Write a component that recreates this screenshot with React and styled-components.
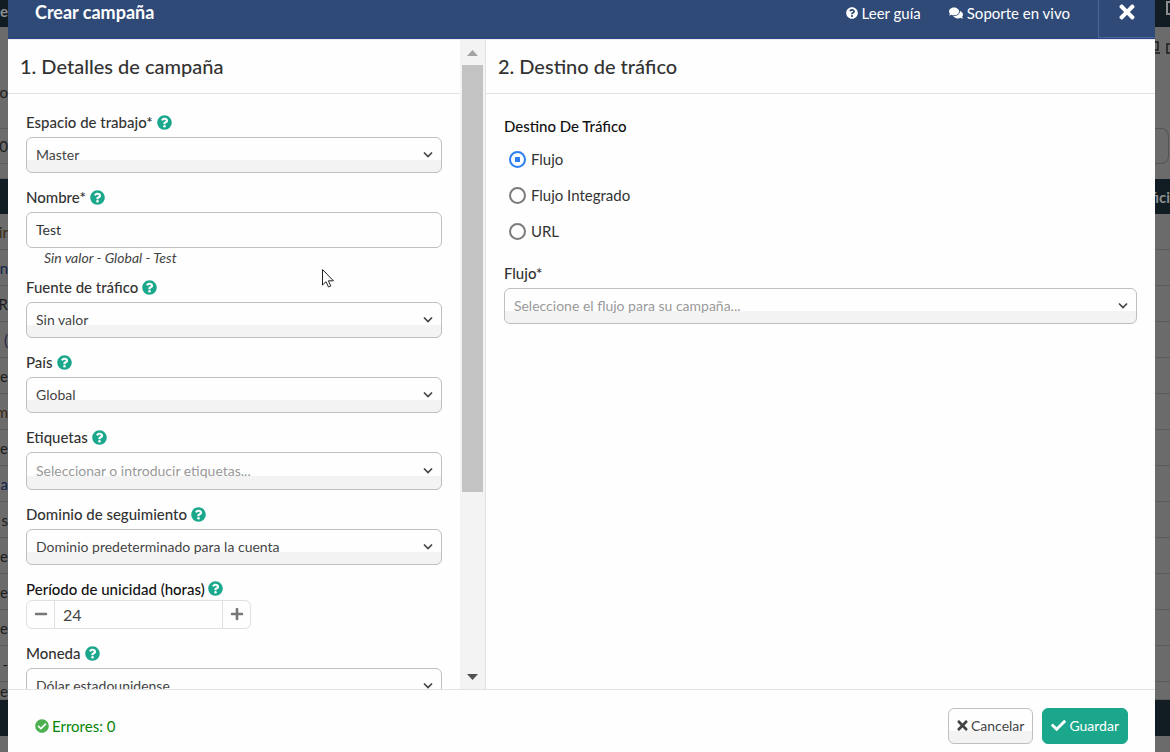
import { useState } from "react";
import styled, { createGlobalStyle } from "styled-components";
import {
  FaQuestionCircle,
  FaComments,
  FaTimes,
  FaCheck,
  FaCheckCircle,
  FaMinus,
  FaPlus,
} from "react-icons/fa";

const GlobalStyle = createGlobalStyle`
  *, *::before, *::after {
    box-sizing: border-box;
  }

  body {
    margin: 0;
    overflow: hidden;
    background-color: #6b6b6b;
    color: #333;
    font-family: Lato, "Open Sans", sans-serif;
    font-size: 15px;
  }

  button, input, select {
    font: inherit;
    color: inherit;
  }
`;

const Page = styled.div`
  display: grid;
  grid-template-columns: 8px minmax(0, 1fr) 15px;
  height: 100vh;
`;

/* dimmed table behind the modal */
const Backdrop = styled.div`
  display: flex;
  flex-direction: column;
  align-items: stretch;
  overflow: hidden;
  background-color: #6b6b6b;
`;

const BackdropBar = styled.div`
  flex: none;
  display: flex;
  align-items: center;
  justify-content: flex-end;
  height: ${({ $h }) => $h}px;
  padding-bottom: ${({ $pb }) => $pb || 0}px;
  background-color: #111c23;
  color: #8c8f91;
  font-weight: bold;
  white-space: nowrap;
  overflow: hidden;
`;

const BackdropRow = styled.div`
  flex: none;
  display: flex;
  align-items: center;
  justify-content: flex-end;
  height: ${({ $h }) => $h || 36}px;
  padding-top: ${({ $pt }) => $pt || 0}px;
  border-bottom: 1px solid #5c5c5c;
  color: ${({ $color }) => $color || "#1c1c1c"};
  white-space: nowrap;
  overflow: hidden;
`;

const BackdropSearch = styled.div`
  flex: none;
  height: 36px;
  margin: 34px 1px 15px 0;
  border: 1px solid #555;
  border-left: none;
  border-radius: 0 8px 8px 0;
`;

const BackdropTools = styled.div`
  flex: none;
  display: flex;
  justify-content: space-between;
  height: 67px;
  padding-top: 14px;
`;

const Modal = styled.div`
  display: flex;
  flex-direction: column;
  min-width: 0;
  min-height: 0;
  background-color: #fefefe;
`;

const ModalHeader = styled.header`
  flex: none;
  display: flex;
  align-items: stretch;
  height: 39px;
  padding-left: 27px;
  background-color: #304a77;
  border-bottom: 1px solid #2c4289;
  color: #fff;
`;

const ModalTitle = styled.h1`
  flex: 1;
  margin: 0;
  padding-top: 2px;
  font-size: 18px;
  line-height: 20px;
  font-weight: bold;
`;

const HeaderLink = styled.a`
  display: flex;
  align-items: center;
  gap: 4px;
  height: 26px;
  margin-right: 28px;
  color: #fff;
  text-decoration: none;
`;

const CloseButton = styled.button`
  display: flex;
  align-items: flex-start;
  justify-content: center;
  width: 57px;
  height: 38px;
  padding: 1px 0 0;
  border: solid #4a669a;
  border-width: 0 0 1px 1px;
  background: none;
  color: #fff;
  font-size: 22px;
  cursor: pointer;
`;

const ModalBody = styled.div`
  flex: 1;
  display: grid;
  grid-template-columns: minmax(0, 5fr) minmax(0, 7fr);
  min-height: 0;
  border-top: 1px solid #ececf2;
`;

const LeftColumn = styled.div`
  display: flex;
  min-height: 0;
  border-right: 1px solid #e2e2e2;
`;

const Panel = styled.section`
  flex: 1;
  min-width: 0;
  overflow: hidden;
`;

const PanelTitle = styled.h2`
  margin: 0;
  padding: 12px 12px 13px;
  border-bottom: 1px solid #e2e2e2;
  font-size: 20px;
  line-height: 28px;
  font-weight: 500;
`;

const Fields = styled.div`
  display: flex;
  flex-direction: column;
  gap: 9px;
  padding: 13px 18px;
`;

const Field = styled.div`
  display: flex;
  flex-direction: column;
`;

const FieldLabel = styled.label`
  display: flex;
  align-items: center;
  gap: ${({ $tight }) => ($tight ? 3 : 4)}px;
  height: ${({ $tight }) => ($tight ? 26 : 30)}px;
  padding-top: ${({ $tight }) => ($tight ? 3 : 0)}px;
  color: ${({ $tight }) => ($tight ? "#111" : "#333")};
  font-weight: 500;
`;

const HelpIcon = styled(FaQuestionCircle)`
  color: #1aa78c;
  font-size: 15px;
`;

const SelectBox = styled.div`
  display: grid;
  align-items: center;

  > * {
    grid-area: 1 / 1;
  }

  > svg {
    justify-self: end;
    margin-right: 8px;
    pointer-events: none;
  }
`;

const Select = styled.select`
  appearance: none;
  width: 100%;
  height: ${({ $tall }) => ($tall ? 38 : 36)}px;
  padding: 0 28px 2px 9px;
  border: 1px solid #bfbfbf;
  border-radius: 6px;
  background: linear-gradient(#fefefe 65%, #f3f3f3 65%);
  color: ${({ $empty }) => ($empty ? "#999" : "#444")};
  font-size: 14px;
`;

const TextInput = styled.input`
  width: 100%;
  height: 36px;
  padding: 0 9px 2px;
  border: 1px solid #bfbfbf;
  border-radius: 6px;
  background-color: #fefefe;
  color: #333;
  font-size: 14px;
`;

const Hint = styled.p`
  margin: 0 18px -5px;
  font-size: 14px;
  line-height: 20px;
  font-style: italic;
  color: #444;
`;

const Stepper = styled.div`
  display: flex;
  width: 225px;
  height: 29px;
  border: 1px solid #e0e0e0;
  border-radius: 6px;
  overflow: hidden;
`;

const StepButton = styled.button`
  width: 27px;
  padding: 0 0 2px;
  border: none;
  background: none;
  color: #777;
  font-size: 14px;
  line-height: 0;
  cursor: pointer;
`;

const StepInput = styled.input`
  flex: 1;
  min-width: 0;
  padding: 0 8px;
  border: solid #e0e0e0;
  border-width: 0 1px;
  background: none;
  color: #444;
  font-size: 16px;
`;

const ScrollTrack = styled.div`
  flex: none;
  display: flex;
  flex-direction: column;
  align-items: stretch;
  width: 25px;
  padding: 0 2px;
  background-color: #f3f3f3;
`;

const ScrollArrow = styled.div`
  flex: none;
  display: flex;
  align-items: center;
  justify-content: center;
  height: 25px;
  color: ${({ $dim }) => ($dim ? "#a3a3a3" : "#505050")};
`;

const ScrollRange = styled.div`
  flex: 1;
`;

const ScrollThumb = styled.div`
  height: 71.3%;
  background-color: #c3c3c3;
`;

const RadioGroup = styled.fieldset`
  min-width: 0;
  margin: 0;
  padding: 0;
  border: none;
`;

const Legend = styled.legend`
  padding: 4px 0 0;
  line-height: 30px;
  color: #111;
  font-weight: 500;
`;

const RadioLabel = styled.label`
  display: flex;
  align-items: center;
  gap: 5px;
  height: 36px;
  padding-left: 5px;
`;

const Radio = styled.input`
  appearance: none;
  width: 17px;
  height: 17px;
  margin: 0;
  border: 2px solid #7b7b7b;
  border-radius: 50%;

  &:checked {
    border-color: #2b7ff0;
    background: radial-gradient(circle, #2b7ff0 45%, transparent 46%) center / 9px 9px no-repeat;
  }
`;

const ModalFooter = styled.footer`
  flex: none;
  display: flex;
  align-items: center;
  gap: 9px;
  height: 63px;
  padding: 10px 27px 0;
  border-top: 1px solid #e2e2e2;
`;

const Errors = styled.p`
  flex: 1;
  display: flex;
  align-items: center;
  gap: 3px;
  margin: 0;
  color: #048404;

  svg {
    color: #4caf50;
    font-size: 14px;
  }
`;

const FooterButton = styled.button`
  display: flex;
  align-items: center;
  gap: 3px;
  height: 36px;
  padding: 0 8px 1px;
  border: 1px solid ${({ $primary }) => ($primary ? "#1aa78c" : "#bfbfbf")};
  border-radius: 6px;
  background: ${({ $primary }) =>
    $primary ? "#1aa78c" : "linear-gradient(#fefefe 65%, #f3f3f3 65%)"};
  color: ${({ $primary }) => ($primary ? "#fff" : "#444")};
  font-size: 14px;
  cursor: pointer;

  svg {
    width: ${({ $primary }) => ($primary ? 15 : 11)}px;
    height: 15px;
  }
`;

const Pointer = styled.svg`
  position: absolute;
  left: 322px;
  top: 269px;
  pointer-events: none;
`;

const Chevron = () => (
  <svg width="12" height="8" viewBox="0 0 12 8" fill="none" aria-hidden="true">
    <path d="M2 1.5l4 4 4-4" stroke="#444" strokeWidth="1.7" />
  </svg>
);

const leftRows = [
  { text: "tir", color: "#3a2a10" },
  { text: "n", color: "#10244a" },
  { text: "R" },
  { text: "(", color: "#2a2440" },
  { text: "e" },
  { text: "m", color: "#3a2410" },
  { text: "e" },
  { text: "a", color: "#10244a" },
  { text: "s" },
  { text: "e" },
  { text: "e" },
  { text: "e" },
  { text: "-" },
];

const SelectField = ({ id, label, value, placeholder, help = true, tall }) => (
  <Field>
    <FieldLabel htmlFor={id}>
      {label}
      {help && <HelpIcon />}
    </FieldLabel>
    <SelectBox>
      <Select id={id} $tall={tall} $empty={!value} defaultValue="0">
        <option value="0">{value || placeholder}</option>
      </Select>
      <Chevron />
    </SelectBox>
  </Field>
);

const BackdropLeft = () => (
  <Backdrop aria-hidden="true">
    <BackdropBar $h={27} $pb={6}>
      e
    </BackdropBar>
    <BackdropRow $h={102} $pt={28}>
      ro
    </BackdropRow>
    <BackdropRow $h={35}>0</BackdropRow>
    <BackdropRow $h={15} />
    <BackdropBar $h={35} />
    {leftRows.map((row, i) => (
      <BackdropRow key={i} $color={row.color}>
        {row.text}
      </BackdropRow>
    ))}
    <BackdropRow $h={18}>ne</BackdropRow>
    <BackdropBar $h={36} />
  </Backdrop>
);

const BackdropRight = () => (
  <Backdrop aria-hidden="true">
    <BackdropBar $h={27} $pb={12}>
      <svg width="5" height="14">
        <path d="M5 1H2v12h3" fill="none" stroke="#8c8f91" strokeWidth="2" />
      </svg>
    </BackdropBar>
    <BackdropTools>
      <svg width="15" height="14" fill="none" stroke="#1c1c1c" strokeWidth="1.5">
        <path d="M0 1h3v8H0M0 12h5M15 3h-3v9h3" />
      </svg>
    </BackdropTools>
    <BackdropSearch />
    <BackdropBar $h={35}>fici</BackdropBar>
    {leftRows.map((_, i) => (
      <BackdropRow key={i} />
    ))}
    <BackdropRow $h={18} />
    <BackdropBar $h={36} />
  </Backdrop>
);

const App = () => {
  const [name, setName] = useState("Test");
  const [hours, setHours] = useState(24);
  const [target, setTarget] = useState("Flujo");

  return (
    <>
      <GlobalStyle />
      <Page>
        <BackdropLeft />
        <Modal role="dialog" aria-labelledby="modal-title">
          <ModalHeader>
            <ModalTitle id="modal-title">Crear campaña</ModalTitle>
            <HeaderLink href="#guia">
              <FaQuestionCircle size={12} />
              Leer guía
            </HeaderLink>
            <HeaderLink href="#soporte">
              <FaComments size={14} />
              Soporte en vivo
            </HeaderLink>
            <CloseButton type="button" aria-label="Cerrar">
              <FaTimes />
            </CloseButton>
          </ModalHeader>

          <ModalBody>
            <LeftColumn>
              <Panel>
                <PanelTitle>1. Detalles de campaña</PanelTitle>
                <Fields>
                  <SelectField id="workspace" label="Espacio de trabajo*" value="Master" />
                  <Field>
                    <FieldLabel htmlFor="name">
                      Nombre*
                      <HelpIcon />
                    </FieldLabel>
                    <TextInput
                      id="name"
                      value={name}
                      onChange={(e) => setName(e.target.value)}
                    />
                    <Hint>Sin valor - Global - {name}</Hint>
                  </Field>
                  <SelectField id="source" label="Fuente de tráfico" value="Sin valor" />
                  <SelectField id="country" label="País" value="Global" />
                  <SelectField
                    id="tags"
                    label="Etiquetas"
                    placeholder="Seleccionar o introducir etiquetas..."
                    tall
                  />
                  <SelectField
                    id="domain"
                    label="Dominio de seguimiento"
                    value="Dominio predeterminado para la cuenta"
                  />
                  <Field>
                    <FieldLabel htmlFor="hours" $tight>
                      Período de unicidad (horas)
                      <HelpIcon />
                    </FieldLabel>
                    <Stepper>
                      <StepButton
                        type="button"
                        aria-label="Menos"
                        onClick={() => setHours(hours - 1)}
                      >
                        <FaMinus />
                      </StepButton>
                      <StepInput
                        id="hours"
                        value={hours}
                        onChange={(e) => setHours(Number(e.target.value) || 0)}
                      />
                      <StepButton
                        type="button"
                        aria-label="Más"
                        onClick={() => setHours(hours + 1)}
                      >
                        <FaPlus />
                      </StepButton>
                    </Stepper>
                  </Field>
                  <SelectField id="currency" label="Moneda" value="Dólar estadounidense" />
                </Fields>
              </Panel>
              <ScrollTrack aria-hidden="true">
                <ScrollArrow $dim>
                  <svg width="11" height="6">
                    <path d="M0 6L5.500 0L11 6z" fill="currentColor" />
                  </svg>
                </ScrollArrow>
                <ScrollRange>
                  <ScrollThumb />
                </ScrollRange>
                <ScrollArrow>
                  <svg width="11" height="6">
                    <path d="M0 0L5.500 6L11 0z" fill="currentColor" />
                  </svg>
                </ScrollArrow>
              </ScrollTrack>
            </LeftColumn>

            <Panel>
              <PanelTitle>2. Destino de tráfico</PanelTitle>
              <Fields>
                <RadioGroup>
                  <Legend>Destino De Tráfico</Legend>
                  {["Flujo", "Flujo Integrado", "URL"].map((option) => (
                    <RadioLabel key={option}>
                      <Radio
                        type="radio"
                        name="target"
                        checked={target === option}
                        onChange={() => setTarget(option)}
                      />
                      {option}
                    </RadioLabel>
                  ))}
                </RadioGroup>
                <SelectField
                  id="flow"
                  label="Flujo*"
                  placeholder="Seleccione el flujo para su campaña..."
                  help={false}
                />
              </Fields>
            </Panel>
          </ModalBody>

          <ModalFooter>
            <Errors>
              <FaCheckCircle />
              Errores: 0
            </Errors>
            <FooterButton type="button">
              <FaTimes />
              Cancelar
            </FooterButton>
            <FooterButton type="submit" $primary>
              <FaCheck />
              Guardar
            </FooterButton>
          </ModalFooter>
        </Modal>
        <BackdropRight />
      </Page>
      <Pointer width="13" height="19" viewBox="0 0 13 19" aria-hidden="true">
        <path
          d="M.5 .5v15.500l3.500-3.300 2.500 5.300 2.300-1-2.400-5.200h5z"
          fill="#fff"
          stroke="#222"
        />
      </Pointer>
    </>
  );
};

export default App;
